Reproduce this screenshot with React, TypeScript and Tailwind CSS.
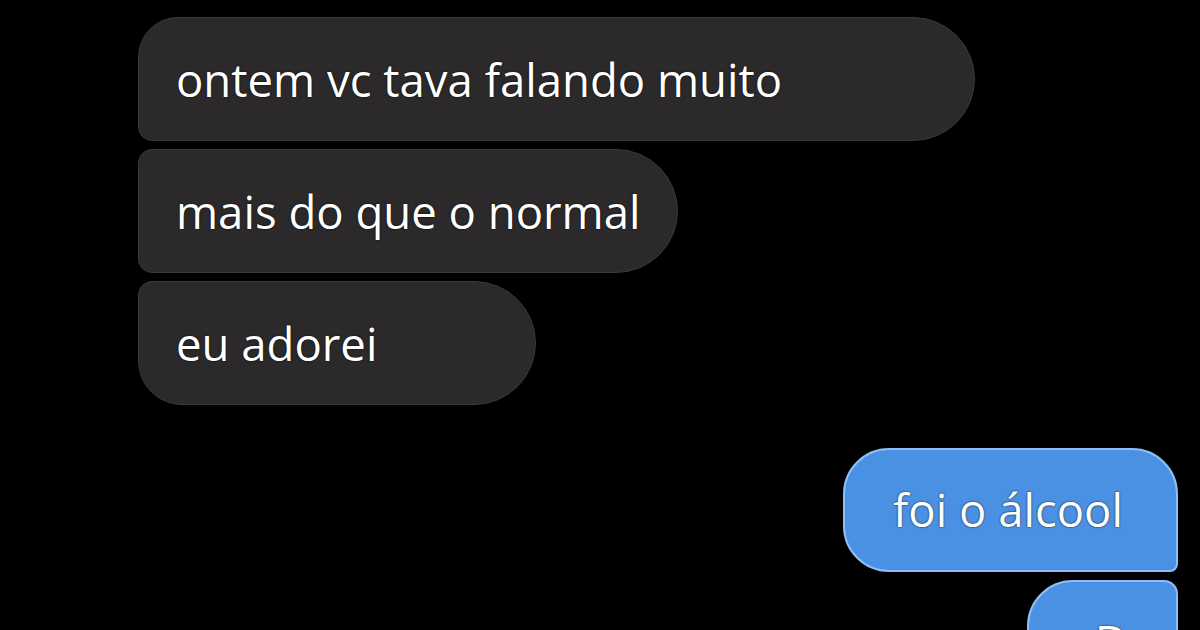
const grey = "bg-[#2b2929] border border-[#3a3838] text-white";
const blue = "bg-[#4b91e3] border-2 border-[#8cc0f5] text-white";
const font = "font-['Open_Sans',_'Liberation_Sans',_sans-serif] text-[45.5px] leading-none [text-shadow:0_0_2px_rgba(0,0,0,0.9)]";

const App = () => (
  <div className="w-[1200px] h-[630px] bg-black overflow-hidden flex flex-col pt-[17px]">
    <div className="flex flex-col gap-2 pl-[138px]">
      <div className={`${grey} ${font} w-[837px] h-[124px] flex items-center pl-[37px] pt-[1px] rounded-tl-[40px] rounded-bl-[14px] rounded-r-[62px]`}>
        ontem vc tava falando muito
      </div>
      <div className={`${grey} ${font} w-[540px] h-[124px] flex items-center pl-[37px] pt-[1px] rounded-l-[14px] rounded-r-[62px]`}>
        mais do que o normal
      </div>
      <div className={`${grey} ${font} w-[398px] h-[124px] flex items-center pl-[37px] pt-[1px] rounded-tl-[14px] rounded-bl-[44px] rounded-r-[62px]`}>
        eu adorei
      </div>
    </div>
    <div className="flex flex-col items-end gap-2 pr-[22px] mt-[43px]">
      <div className={`${blue} ${font} w-[335px] h-[124px] flex items-center pl-[48px] rounded-tl-[46px] rounded-bl-[46px] rounded-tr-[46px] rounded-br-[8px]`}>
        foi o álcool
      </div>
      <div className={`${blue} ${font} w-[151px] h-[124px] flex items-center pl-[42px] rounded-tl-[46px] rounded-tr-[14px] rounded-b-[46px] shrink-0`}>
        xD
      </div>
    </div>
  </div>
);

export default App;
